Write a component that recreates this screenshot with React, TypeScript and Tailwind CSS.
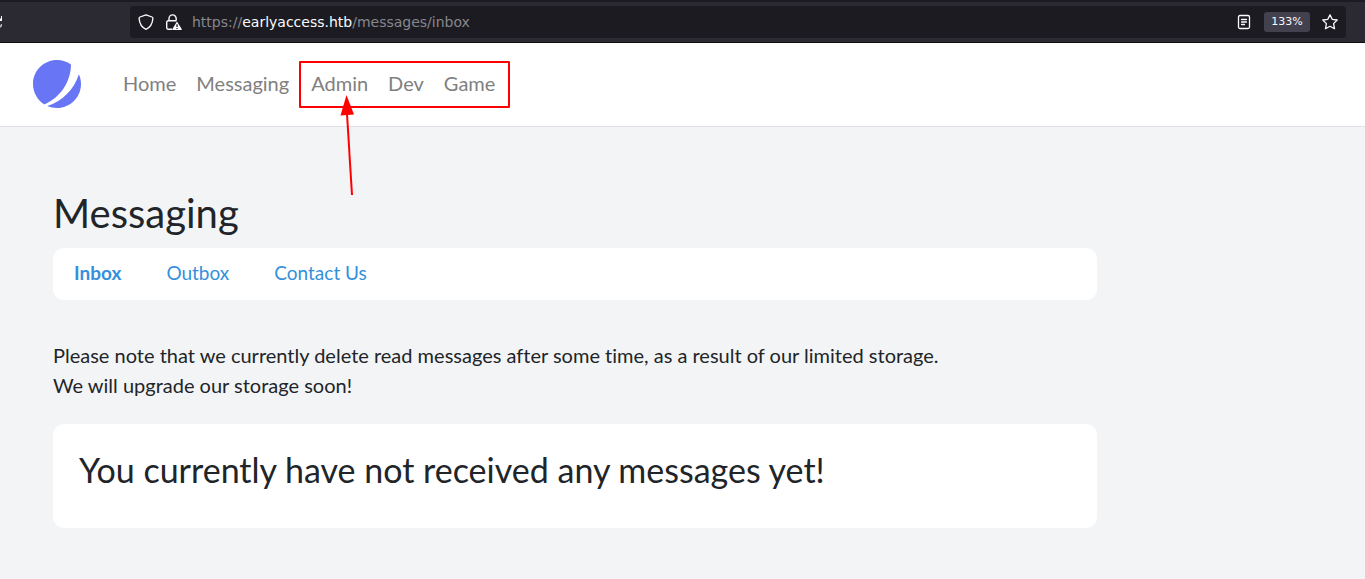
import React from "react";

const navLink = "pb-1 text-[20px] leading-[30px] text-[#808080] hover:text-[#4d4d4d]";
const tabLink = "pb-0.5 text-[19px] leading-[30px] text-[#3490dc] hover:underline";

function ReloadIcon() {
  return (
    <svg viewBox="0 0 3 12" className="block h-3 w-[3px]" aria-hidden="true">
      <path d="M2 0v5H0V3l1-1V0z" fill="#fbfbfe" />
      <path d="M2 8v2l-1 1.5H0V10l1-2z" fill="#b9b9bd" />
    </svg>
  );
}

function ShieldIcon() {
  return (
    <svg viewBox="0 0 16 16" className="block size-4" fill="none" stroke="#fbfbfe" strokeWidth="1.3" strokeLinejoin="round" aria-hidden="true">
      <path d="M8 .8 L14 3 c.7.3 1 .7.9 1.4 C14.5 9.8 12.2 13.5 8 15.3 C3.8 13.5 1.5 9.8 1.1 4.4 C1 3.7 1.3 3.3 2 3z" />
    </svg>
  );
}

function LockWarningIcon() {
  return (
    <svg viewBox="0 0 16 16" className="block size-4" aria-hidden="true">
      <path d="M3 6.5V4.5a3.6 3.6 0 0 1 7.2 0v2M6 15.3H2.2A1.5 1.5 0 0 1 .7 13.8V8.2A1.5 1.5 0 0 1 2.2 6.7h8.3" fill="none" stroke="#fbfbfe" strokeWidth="1.4" />
      <path d="M11 7.5 15.7 15a.7.7 0 0 1-.6 1H7a.7.7 0 0 1-.6-1z" fill="#fbfbfe" />
      <path d="M10.4 10.2h1.3v2.9h-1.3zM10.4 13.9h1.3v1.2h-1.3z" fill="#1c1b22" />
    </svg>
  );
}

function ReaderIcon() {
  return (
    <svg viewBox="0 0 14 16" className="block h-4 w-3.5" fill="none" stroke="#fbfbfe" strokeWidth="1.3" strokeLinecap="round" aria-hidden="true">
      <rect x="1.5" y="1.5" width="11" height="13" rx="1.5" />
      <path d="M4.5 5.5h5M4.5 8h5M4.5 10.5h3" />
    </svg>
  );
}

function StarIcon() {
  return (
    <svg viewBox="0 0 16 16" className="block size-4" fill="none" stroke="#fbfbfe" strokeWidth="1.3" strokeLinejoin="round" aria-hidden="true">
      <path d="M8 .9 10.2 5.3 15.2 6 11.6 9.6 12.5 14.7 8 12.3 3.5 14.7 4.4 9.6.8 6 5.8 5.3z" />
    </svg>
  );
}

function Logo() {
  return (
    <svg viewBox="0 0 48 48" className="block size-12" fill="#6875f5" aria-hidden="true">
      <path d="M11.395 44.428C4.557 40.198 0 32.632 0 24 0 10.745 10.745 0 24 0a23.891 23.891 0 0113.997 4.502c-.2 17.907-11.097 33.245-26.602 39.926z" />
      <path d="M14.134 45.885A23.914 23.914 0 0024 48c13.255 0 24-10.745 24-24 0-3.516-.756-6.856-2.115-9.866-4.659 15.143-16.608 27.092-31.75 31.751z" />
    </svg>
  );
}

function BrowserBar() {
  return (
    <div className="flex h-[43px] items-center border-t-2 border-b border-t-[#1c1b22] border-b-[#0c0c0d] bg-[#2b2a33] pr-[19px]">
      <button type="button" aria-label="Reload" className="mr-[127px]">
        <ReloadIcon />
      </button>
      <div className="flex h-8 flex-1 items-center rounded bg-[#1c1b22] px-2 font-['DejaVu_Sans',sans-serif]">
        <button type="button" aria-label="Tracking protection" className="mr-3">
          <ShieldIcon />
        </button>
        <button type="button" aria-label="Connection not secure" className="mr-2.5">
          <LockWarningIcon />
        </button>
        <div className="flex-1 text-[14px] leading-5 text-[#87878c]">
          https://<span className="text-[#fbfbfe]">earlyaccess.htb</span>/messages/inbox
        </div>
        <button type="button" aria-label="Reader view" className="mr-[13px]">
          <ReaderIcon />
        </button>
        <button type="button" className="mr-3 h-5 w-[46px] rounded-[3px] bg-[#42414d] text-[11px] leading-5 text-[#fbfbfe]">
          133%
        </button>
        <button type="button" aria-label="Bookmark">
          <StarIcon />
        </button>
      </div>
    </div>
  );
}

function NavBar() {
  return (
    <nav className="flex h-[84px] items-center border-b border-[#dee2e6] bg-white pl-[33px]">
      <a href="#home" aria-label="Start page" className="mr-[42px] pb-0.5">
        <Logo />
      </a>
      <div className="flex items-center gap-5">
        <a href="#home" className={navLink}>Home</a>
        <a href="#messaging" className={navLink}>Messaging</a>
      </div>
      <div className="relative ml-2.5 flex h-[47px] items-center gap-5 rounded-[1px] border-2 border-[#ff0000] pr-[13px] pl-2.5">
        <a href="#admin" className={navLink}>Admin</a>
        <a href="#dev" className={navLink}>Dev</a>
        <a href="#game" className={navLink}>Game</a>
        <svg viewBox="0 0 16 102" className="pointer-events-none absolute top-[31px] left-[39px] h-[102px] w-4" aria-hidden="true">
          <path d="M7 20 12 101" stroke="#ff0000" strokeWidth="2" />
          <path d="M6.5 1 14 20.5.5 21.5z" fill="#ff0000" />
        </svg>
      </div>
    </nav>
  );
}

export default function App() {
  return (
    <div className="min-h-screen bg-[#f3f4f6] font-['Lato',sans-serif] text-[#212529] [font-variant-ligatures:none]">
      <BrowserBar />
      <NavBar />
      <main className="px-[53px] pt-[63px] pb-[51px]">
        <div className="max-w-[1044px]">
          <h1 className="mb-[11px] text-[40px] leading-[47px]">Messaging</h1>
          <div className="flex h-[52px] items-center gap-[45px] rounded-[11px] bg-white px-[21px]">
            <a href="#inbox" className={`${tabLink} font-bold`}>Inbox</a>
            <a href="#outbox" className={tabLink}>Outbox</a>
            <a href="#contact" className={tabLink}>Contact Us</a>
          </div>
          <p className="mt-10 text-[20px] leading-[30px]">
            Please note that we currently delete read messages after some time, as a result of our limited storage.
            <br />
            We will upgrade our storage soon!
          </p>
          <section className="mt-6 rounded-[11px] bg-white px-[26px] pt-[26px] pb-[38px]">
            <h2 className="text-[34px] leading-10">You currently have not received any messages yet!</h2>
          </section>
        </div>
      </main>
    </div>
  );
}
